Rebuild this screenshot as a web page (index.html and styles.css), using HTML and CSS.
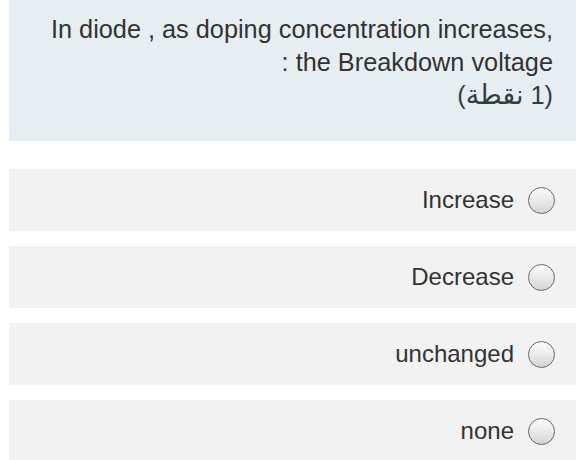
FILE: index.html
```html
<!DOCTYPE html>
<html lang="ar">
<head>
<meta charset="utf-8">
<title>Question</title>
<link rel="stylesheet" href="styles.css">
</head>
<body>
<div class="form">
  <div class="question">
    <div class="line" dir="ltr">In diode , as doping concentration increases,</div>
    <div class="line" dir="ltr">: the Breakdown voltage</div>
    <div class="line points" dir="rtl">(1 <span class="ar">نقطة</span>)</div>
  </div>
  <div class="options">
    <label class="option"><span class="text">Increase</span><span class="radio"></span></label>
    <label class="option"><span class="text">Decrease</span><span class="radio"></span></label>
    <label class="option"><span class="text">unchanged</span><span class="radio"></span></label>
    <label class="option"><span class="text">none</span><span class="radio"></span></label>
  </div>
</div>
</body>
</html>
```
FILE: styles.css
```css
html, body {
  margin: 0;
  padding: 0;
  background: #ffffff;
}
body {
  font-family: "Liberation Sans", Arial, "DejaVu Sans", sans-serif;
  color: #333333;
}
.form {
  padding-left: 9px;
}
.question {
  background: #e7eef1;
  padding: 13px 23px 29px 0;
  font-size: 25.3px;
  line-height: 33px;
  text-align: right;
}
.points {
  color: #2f3f3f;
}
.ar {
  font-size: 27px;
}
.options {
  margin-top: 28px;
  display: flex;
  flex-direction: column;
  gap: 15px;
}
.option {
  height: 62px;
  background: #f2f2f2;
  display: flex;
  align-items: center;
  justify-content: flex-end;
  padding-right: 21px;
  gap: 14px;
  font-size: 24px;
}
.radio {
  width: 25px;
  height: 25px;
  border-radius: 50%;
  border: 1.5px solid #666666;
  background: linear-gradient(to bottom, #fbfbfb 0%, #e6e6e6 60%, #d4d4d4 100%);
  flex: none;
}
```
